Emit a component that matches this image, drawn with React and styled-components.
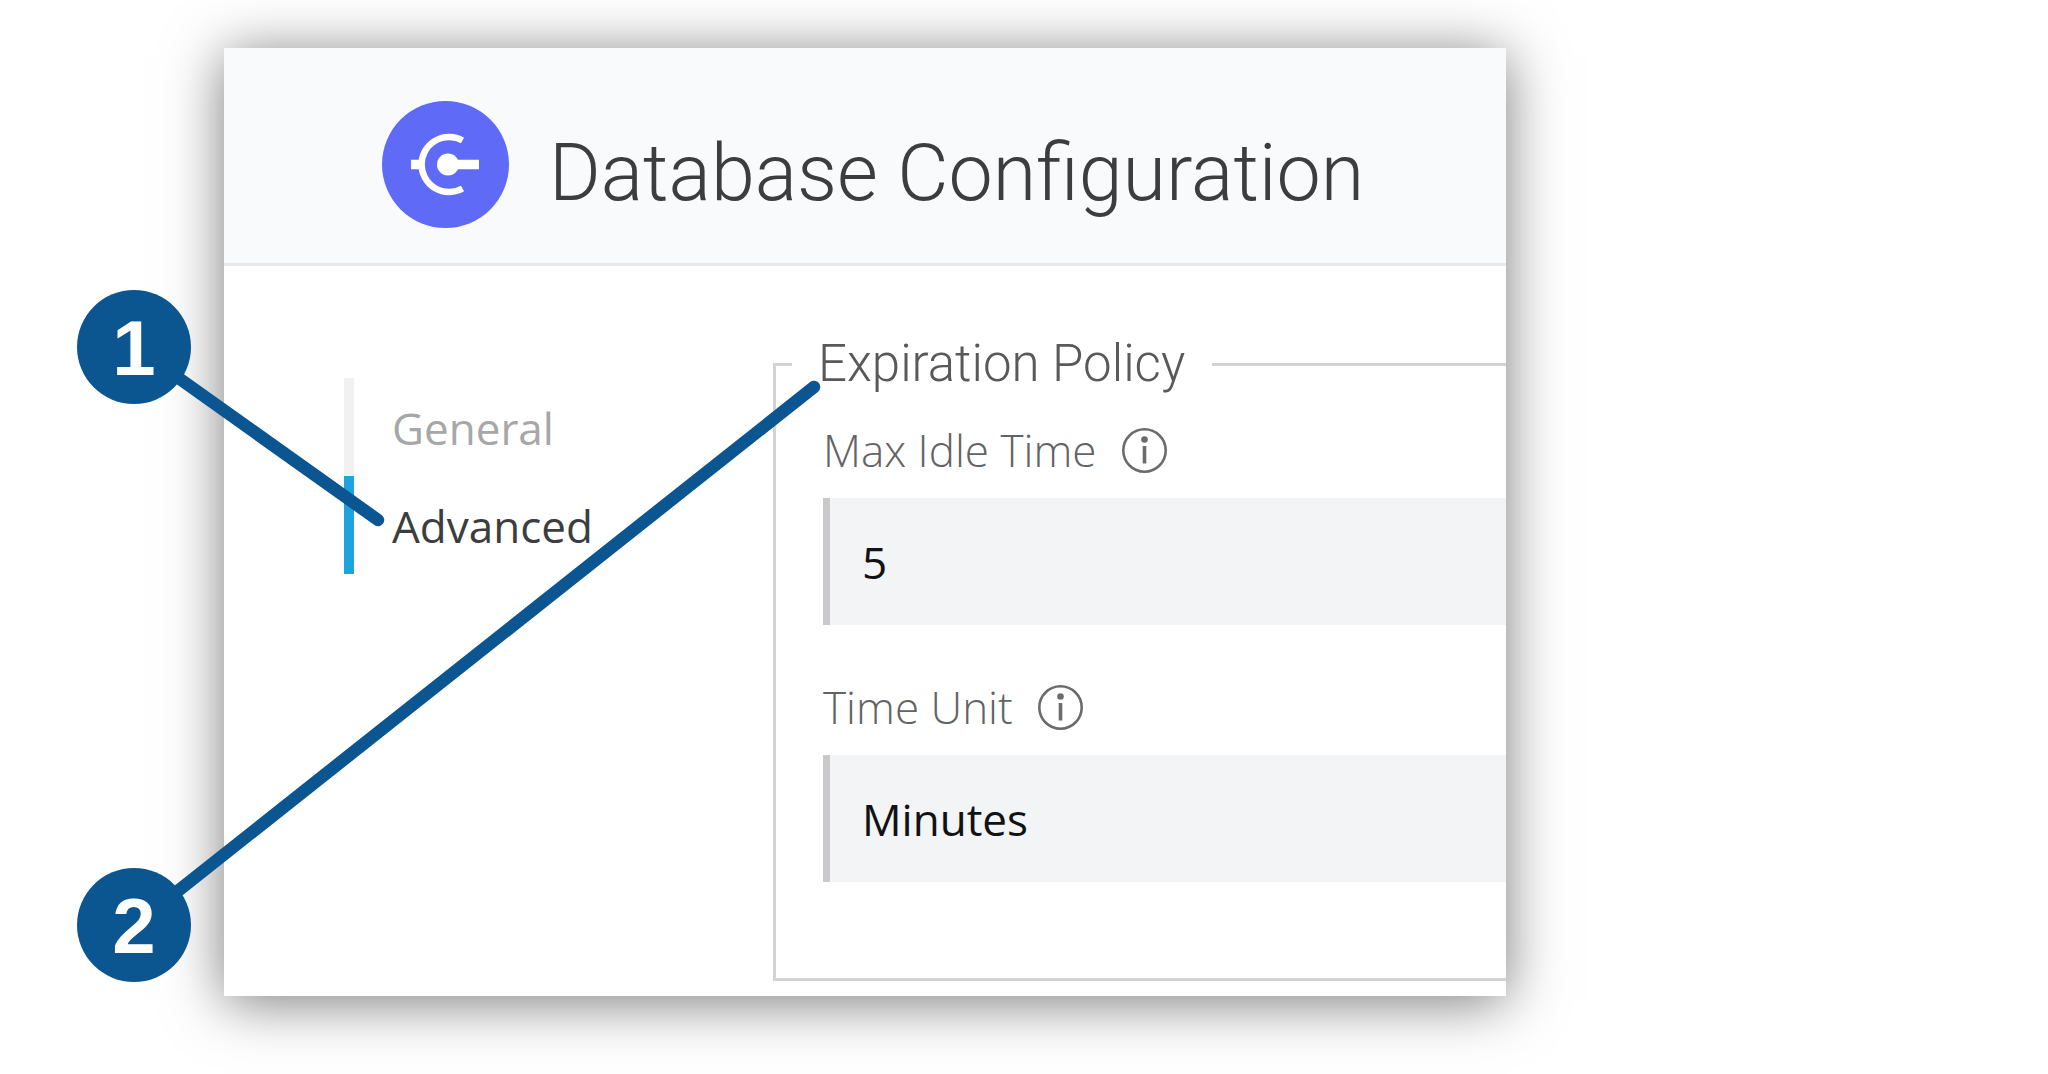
import React from "react";
import styled, { createGlobalStyle } from "styled-components";

const GlobalStyle = createGlobalStyle`
  * { box-sizing: border-box; }
  body {
    margin: 0;
    background: #fff;
    font-family: "Open Sans", "Noto Sans", sans-serif;
  }
`;

const headingFont = `Roboto, "Liberation Sans", sans-serif`;

const Page = styled.main`
  position: relative;
  padding: 48px 542px 78px 224px;
`;

const Card = styled.section`
  overflow: hidden;
  background: #fff;
`;

const CardShadow = styled.div`
  box-shadow: 0 6px 54px rgba(0, 0, 0, 0.52);
`;

const Header = styled.header`
  display: flex;
  align-items: flex-end;
  gap: 40px;
  padding: 53px 0 35px 158px;
  background: #f9fafc;
  border-bottom: 3px solid #e7e8ea;
`;

const Logo = styled.svg`
  flex: none;
  width: 127px;
  height: 127px;
`;

const Title = styled.h1`
  margin: 0;
  font: 300 79px/110px ${headingFont};
  color: #3c3d3f;
  white-space: nowrap;
`;

const Body = styled.div`
  display: grid;
  grid-template-columns: 429px 1fr;
  padding: 66px 0 15px 120px;
`;

const Tabs = styled.nav`
  display: flex;
  flex-direction: column;
  padding-top: 46px;
`;

const Tab = styled.a`
  width: max-content;
  padding: 2px 0 0 38px;
  border-left: 10px solid ${(p) => (p.$active ? "#1fa3dc" : "#f1f1f1")};
  color: ${(p) => (p.$active ? "#3c3d3f" : "#a7a7a8")};
  font-size: 44px;
  line-height: 96px;
  text-decoration: none;
`;

const Group = styled.fieldset`
  min-width: 0;
  margin: 0;
  padding: 32px 0 96px 16px;
  border: 3px solid #d3d3d4;
  border-right: 0;
`;

const Legend = styled.legend`
  padding: 0 27px 0 26px;
  font: 300 51px/64px ${headingFont};
  color: #58595b;
`;

const Fields = styled.div`
  display: flex;
  flex-direction: column;
  gap: 60px;
  padding-left: 31px;
`;

const Field = styled.div`
  display: flex;
  flex-direction: column;
  gap: 25px;
`;

const LabelRow = styled.div`
  display: flex;
  align-items: center;
  gap: 25px;
  height: 45px;
`;

const Label = styled.label`
  font-size: 44px;
  font-weight: 300;
  line-height: 45px;
  color: #626365;
`;

const InfoButton = styled.button`
  display: flex;
  padding: 0;
  border: 0;
  background: none;
  color: #6b6c6e;
`;

const control = `
  width: 100%;
  height: 127px;
  margin: 0;
  padding: 0 0 0 32px;
  border: 0;
  border-left: 7px solid #c9c9cb;
  border-radius: 0;
  outline: 0;
  appearance: none;
  background: #f3f4f6;
  color: #111214;
  font-family: inherit;
  font-size: 44px;
`;

const TextInput = styled.input`${control}`;
const Select = styled.select`${control}`;

const Pointers = styled.svg`
  position: absolute;
  top: 0;
  left: 0;
  width: 840px;
  height: 1000px;
  pointer-events: none;
`;

const Badge = styled.span`
  position: absolute;
  left: 77px;
  top: ${(p) => p.$top}px;
  display: flex;
  align-items: center;
  justify-content: center;
  width: 114px;
  height: 114px;
  padding-top: 2px;
  border-radius: 50%;
  background: #0b5591;
  color: #fff;
  font: bold 78px/112px "Liberation Sans", Arial, sans-serif;
`;

function InfoIcon() {
  return (
    <svg width="45" height="45" viewBox="0 0 45 45" aria-hidden="true">
      <circle cx="22.5" cy="22.5" r="21.2" fill="none" stroke="currentColor" strokeWidth="2.6" />
      <circle cx="22.5" cy="11.5" r="3.3" fill="currentColor" />
      <path d="M22.5 18v17.5" stroke="currentColor" strokeWidth="3.6" />
    </svg>
  );
}

function FormField({ id, label, children }) {
  return (
    <Field>
      <LabelRow>
        <Label htmlFor={id}>{label}</Label>
        <InfoButton type="button" aria-label={`About ${label}`}>
          <InfoIcon />
        </InfoButton>
      </LabelRow>
      {children}
    </Field>
  );
}

export default function App() {
  return (
    <>
      <GlobalStyle />
      <Page>
        <CardShadow>
          <Card>
            <Header>
              <Logo viewBox="0 0 127 127" aria-hidden="true">
                <circle cx="63.5" cy="63.5" r="63.5" fill="#5f6bf6" />
                <path d="M80.5 39.5A27.5 27.5 0 1 0 80.5 87.5" fill="none" stroke="#fff" strokeWidth="6.5" />
                <path d="M29 63.5h9M66 63.5h31" stroke="#fff" strokeWidth="9.5" />
                <circle cx="66" cy="63.5" r="11" fill="#fff" />
              </Logo>
              <Title>Database Configuration</Title>
            </Header>
            <Body>
              <Tabs aria-label="Sections">
                <Tab href="#general">General</Tab>
                <Tab href="#advanced" $active aria-current="page">Advanced</Tab>
              </Tabs>
              <Group>
                <Legend>Expiration Policy</Legend>
                <Fields>
                  <FormField id="max-idle" label="Max Idle Time">
                    <TextInput id="max-idle" type="text" defaultValue="5" />
                  </FormField>
                  <FormField id="time-unit" label="Time Unit">
                    <Select id="time-unit" defaultValue="Minutes">
                      <option>Minutes</option>
                    </Select>
                  </FormField>
                </Fields>
              </Group>
            </Body>
          </Card>
        </CardShadow>
        <Pointers viewBox="0 0 840 1000" aria-hidden="true">
          <path
            d="M135 347 378 520M135 925 814 387"
            stroke="#0b5591"
            strokeWidth="12.5"
            strokeLinecap="round"
          />
        </Pointers>
        <Badge $top={290}>1</Badge>
        <Badge $top={868}>2</Badge>
      </Page>
    </>
  );
}
